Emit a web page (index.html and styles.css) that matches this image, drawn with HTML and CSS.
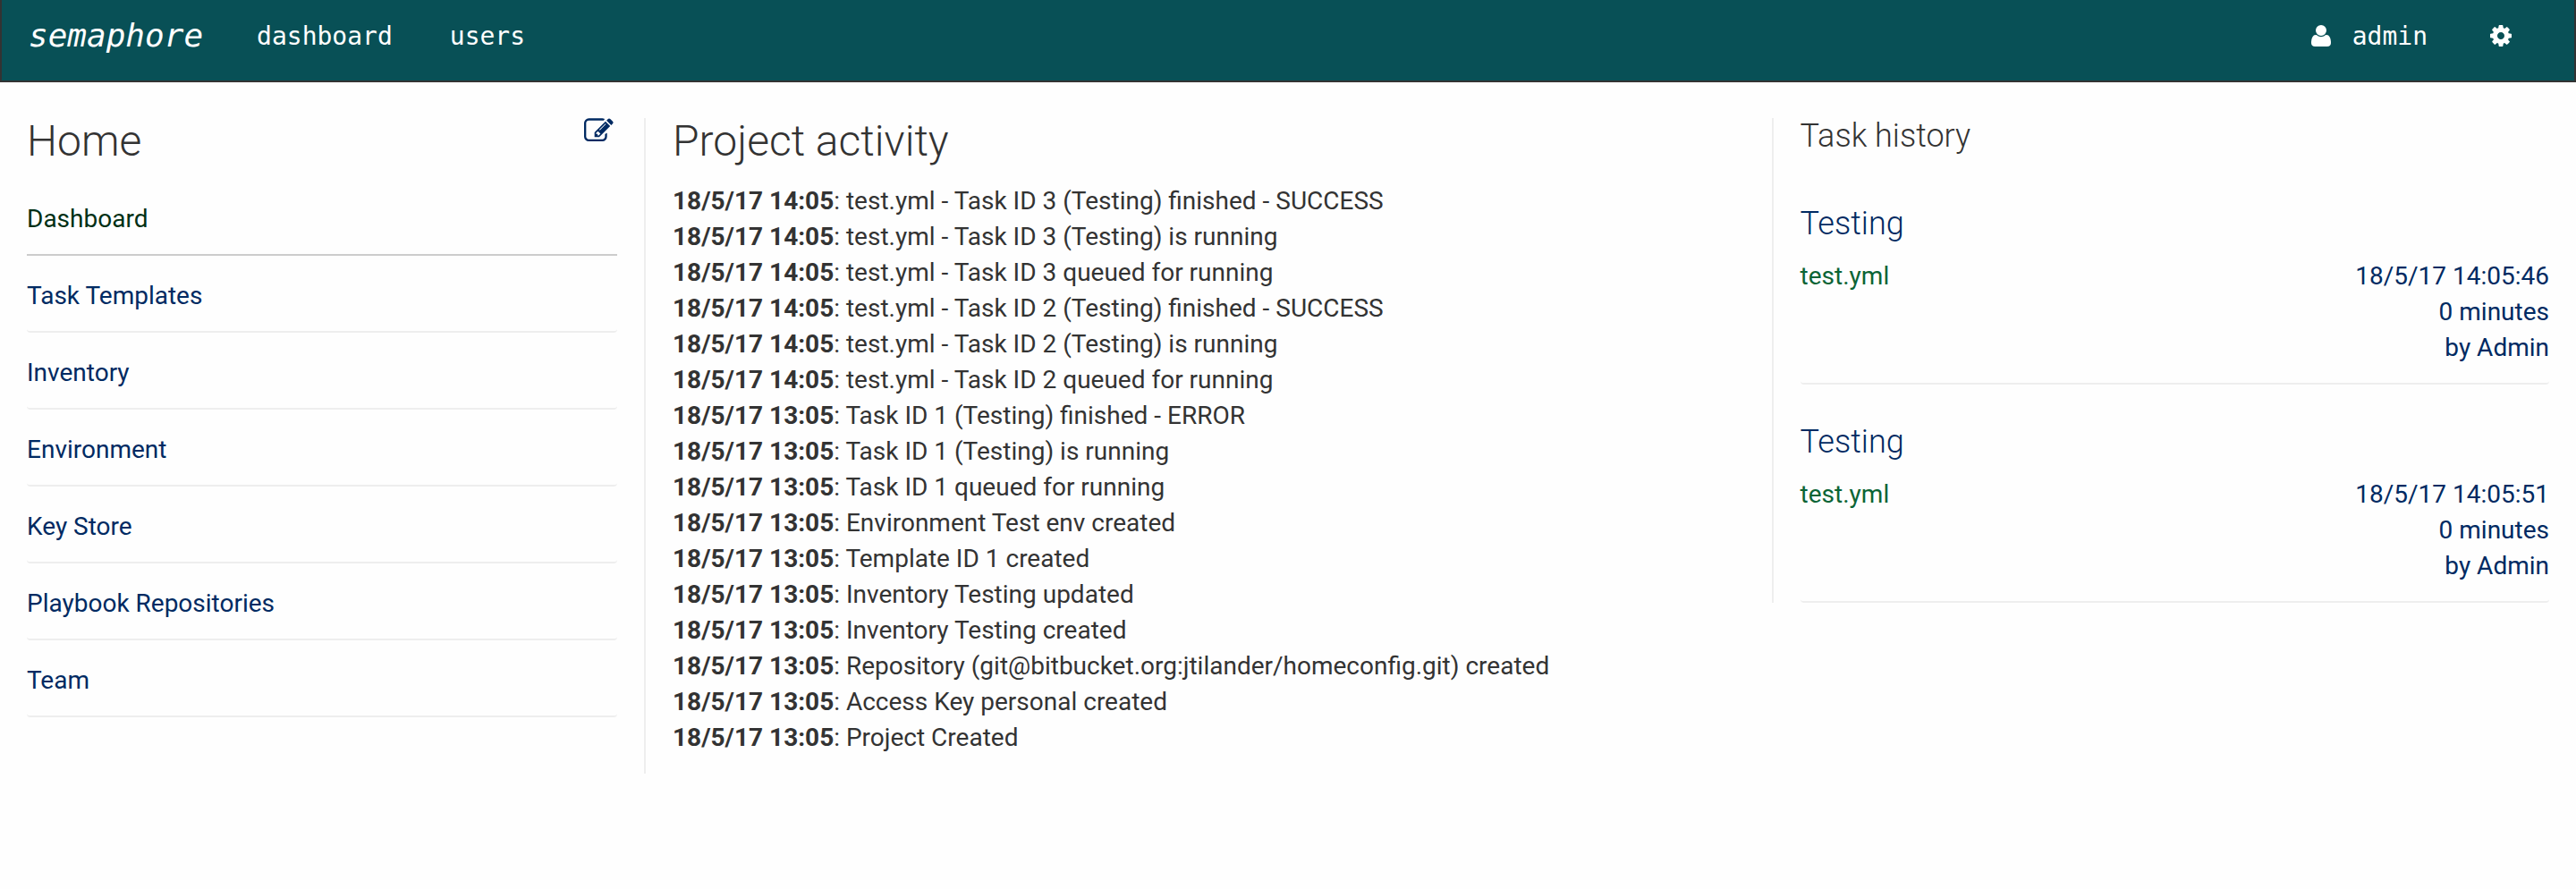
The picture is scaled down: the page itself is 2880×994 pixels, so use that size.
FILE: index.html
```
<!DOCTYPE html>
<html lang="en">
<head>
<meta charset="utf-8">
<title>semaphore</title>
<link rel="stylesheet" href="styles.css">
</head>
<body>
<nav class="navbar">
  <a class="brand">semaphore</a>
  <a class="nav-link">dashboard</a>
  <a class="nav-link">users</a>
  <div class="nav-right">
    <a class="nav-user"><svg class="icon-user" viewBox="0 0 1408 1536"><path transform="matrix(1 0 0 -1 0 1408)" d="M1408 131q0 -120 -73 -189.5t-194 -69.5h-874q-121 0 -194 69.5t-73 189.5q0 53 3.5 103.5t14 109t26.5 108.5t43 97.5t62 81t85.5 53.5t111.5 20q9 0 42 -21.5t74.5 -48t108 -48t133.5 -21.5t133.5 21.5t108 48t74.5 48t42 21.5q61 0 111.5 -20t85.5 -53.5t62 -81t43 -97.5t26.5 -108.5t14 -109t3.5 -103.5zM1088 1024q0 -159 -112.5 -271.5t-271.5 -112.5t-271.5 112.5t-112.5 271.5t112.5 271.5t271.5 112.5t271.5 -112.5t112.5 -271.5z"/></svg>admin</a>
    <a class="nav-cog"><svg class="icon-cog" viewBox="128 128 1536 1536"><path d="M1152 896q0-106-75-181t-181-75-181 75-75 181 75 181 181 75 181-75 75-181zm512-109v222q0 12-8 23t-20 13l-185 28q-19 54-39 91 35 50 107 138 10 12 10 25t-9 23q-27 37-99 108t-94 71q-12 0-26-9l-138-108q-44 23-91 38-16 136-29 186-7 28-36 28h-222q-14 0-24.5-8.5t-11.5-21.5l-28-184q-49-16-90-37l-141 107q-10 9-25 9-14 0-25-11-126-114-165-168-7-10-7-23 0-12 8-23 15-21 51-66.5t54-70.5q-27-50-41-99l-183-27q-13-2-21-12.5t-8-23.5v-222q0-12 8-23t19-13l186-28q14-46 39-92-40-57-107-138-10-12-10-24 0-10 9-23 26-36 98.5-107.5t94.5-71.5q13 0 26 10l138 107q44-23 91-38 16-136 29-186 7-28 36-28h222q14 0 24.5 8.5t11.5 21.5l28 184q49 16 90 37l142-107q9-9 24-9 13 0 25 10 129 119 165 170 7 8 7 22 0 12-8 23-15 21-51 66.5t-54 70.5q26 50 41 98l183 28q13 2 21 12.5t8 23.5z"/></svg></a>
  </div>
</nav>
<main class="columns">
  <aside class="sidebar">
    <div class="sidebar-head">
      <h3>Home</h3>
      <svg class="icon-edit" viewBox="0 0 1792 1792"><path d="M888 1184l116-116-152-152-116 116v56h96v96h56zm440-720q-16-16-33 1l-350 350q-17 17-1 33t33-1l350-350q17-17 1-33zm80 594v190q0 119-84.5 203.5t-203.5 84.5h-832q-119 0-203.5-84.5t-84.5-203.5v-832q0-119 84.5-203.5t203.5-84.5h832q63 0 117 25 15 7 18 23 3 17-9 29l-49 49q-14 14-32 8-23-6-45-6h-832q-66 0-113 47t-47 113v832q0 66 47 113t113 47h832q66 0 113-47t47-113v-126q0-13 9-22l64-64q15-15 35-7t20 29zm-96-738l288 288-672 672h-288v-288zm444 132l-92 92-288-288 92-92q28-28 68-28t68 28l152 152q28 28 28 68t-28 68z"/></svg>
    </div>
    <ul class="menu">
      <li class="active">Dashboard</li>
      <li>Task Templates</li>
      <li>Inventory</li>
      <li>Environment</li>
      <li>Key Store</li>
      <li>Playbook Repositories</li>
      <li>Team</li>
    </ul>
  </aside>
  <section class="activity">
    <h3>Project activity</h3>
    <ul class="events">
      <li><b>18/5/17 14:05</b>: test.yml - Task ID 3 (Testing) finished - SUCCESS</li>
      <li><b>18/5/17 14:05</b>: test.yml - Task ID 3 (Testing) is running</li>
      <li><b>18/5/17 14:05</b>: test.yml - Task ID 3 queued for running</li>
      <li><b>18/5/17 14:05</b>: test.yml - Task ID 2 (Testing) finished - SUCCESS</li>
      <li><b>18/5/17 14:05</b>: test.yml - Task ID 2 (Testing) is running</li>
      <li><b>18/5/17 14:05</b>: test.yml - Task ID 2 queued for running</li>
      <li><b>18/5/17 13:05</b>: Task ID 1 (Testing) finished - ERROR</li>
      <li><b>18/5/17 13:05</b>: Task ID 1 (Testing) is running</li>
      <li><b>18/5/17 13:05</b>: Task ID 1 queued for running</li>
      <li><b>18/5/17 13:05</b>: Environment Test env created</li>
      <li><b>18/5/17 13:05</b>: Template ID 1 created</li>
      <li><b>18/5/17 13:05</b>: Inventory Testing updated</li>
      <li><b>18/5/17 13:05</b>: Inventory Testing created</li>
      <li><b>18/5/17 13:05</b>: Repository (git@bitbucket.org:jtilander/homeconfig.git) created</li>
      <li><b>18/5/17 13:05</b>: Access Key personal created</li>
      <li><b>18/5/17 13:05</b>: Project Created</li>
    </ul>
  </section>
  <section class="history">
    <h4 class="history-title">Task history</h4>
    <article class="task">
      <h4>Testing</h4>
      <div class="task-body">
        <span class="playbook">test.yml</span>
        <div class="meta">18/5/17 14:05:46<br>0 minutes<br>by Admin</div>
      </div>
    </article>
    <article class="task">
      <h4>Testing</h4>
      <div class="task-body">
        <span class="playbook">test.yml</span>
        <div class="meta">18/5/17 14:05:51<br>0 minutes<br>by Admin</div>
      </div>
    </article>
  </section>
</main>
</body>
</html>
```
FILE: styles.css
```
* { box-sizing: border-box; }
body {
  margin: 0;
  background: #fefefe;
  color: #333;
  font: 28px/40px Roboto, sans-serif;
}
h3, h4 { margin: 0; font-weight: 300; line-height: 1.1; }
h3 { font-size: 48px; margin-bottom: 20px; }
h4 { font-size: 36px; }
ul { margin: 0; padding: 0; list-style: none; }

.navbar {
  display: flex;
  height: 92px;
  padding: 20px 70px 0 30px;
  border: 2px solid #333;
  border-top: 0;
  background: #085056;
  color: #fff;
  font-family: "DejaVu Sans Mono", monospace;
}
.brand { font-size: 36px; font-style: italic; margin-right: 60px; }
.nav-link { margin-right: 64px; padding-top: 1px; }
.nav-right { display: flex; margin-left: auto; padding-top: 1px; }
.nav-user { margin-right: 70px; }
.navbar svg { fill: currentColor; vertical-align: top; margin-top: 7px; }
.icon-user { width: 22px; height: 24px; margin-right: 24px; }
.icon-cog { width: 24px; height: 24px; }

.columns { display: flex; align-items: flex-start; padding-top: 40px; }
.sidebar { width: 720px; padding: 0 30px; }
.sidebar-head { display: flex; justify-content: space-between; height: 72px; }
.icon-edit { width: 32.7px; height: 32.7px; fill: #002a62; margin: -2px 4px 0 0; }
.menu li {
  height: 82px;
  margin-bottom: 4px;
  padding-top: 20.8px;
  border-bottom: 2px solid #eee;
  border-radius: 4px;
  color: #002a62;
}
.menu li.active { border-bottom-color: #ccc; border-radius: 0; color: #003015; }

.activity {
  width: 1260.6px;
  padding: 0 30px 20px;
  border-left: 2px solid #eee;
}
.history {
  flex: 1;
  padding: 0 30px;
  border-left: 2px solid #eee;
}
.history-title { height: 58px; padding-top: 1px; }
.task {
  height: 240px;
  margin-bottom: 4px;
  padding-top: 40px;
  border-bottom: 2px solid #eee;
  border-radius: 4px;
  color: #002a62;
}
.task:last-child { margin-bottom: 0; }
.task h4 { margin-bottom: 18px; padding-top: 1.4px; }
.task-body { display: flex; justify-content: space-between; }
.playbook { color: #0b6435; }
.meta { text-align: right; }
```
